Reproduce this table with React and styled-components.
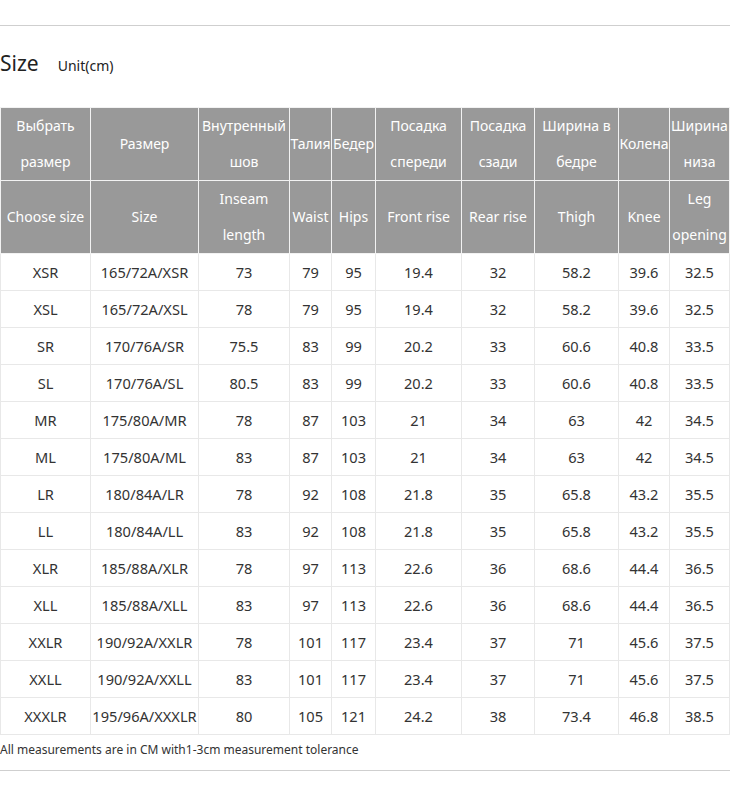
import React from "react";
import styled, { createGlobalStyle } from "styled-components";

const Global = createGlobalStyle`
  html, body { margin: 0; padding: 0; background: #fff; }
  body { font-family: "Noto Sans", "Open Sans", sans-serif; color: #333; }
`;

const Page = styled.div`
  width: 730px;
  padding-top: 25px;
`;

const Rule = styled.div`
  height: 1px;
  background: #cfcfcf;
`;

const TitleRow = styled.div`
  height: 81px;
  display: flex;
  align-items: center;
`;

const TitleGroup = styled.div`
  display: flex;
  align-items: baseline;
  gap: 19px;
  margin-top: -7px;
`;

const Title = styled.span`
  font-size: 21px;
  color: #222;
`;

const Unit = styled.span`
  font-size: 14px;
  color: #222;
`;

const Table = styled.table`
  width: 730px;
  border-collapse: collapse;
  table-layout: fixed;
  font-size: 14px;
`;

const Th = styled.td`
  background: #999999;
  color: #fff;
  border: 1px solid #f2f2f2;
  text-align: center;
  line-height: 36px;
  padding: 0;
  height: 72px;
  white-space: ${(p) => (p.$nowrap ? "nowrap" : "normal")};
  overflow: visible;
`;

const Td = styled.td`
  border: 1px solid #e8e8e8;
  text-align: center;
  line-height: 36px;
  height: 36px;
  padding: 0;
  font-size: 14.6px;
  color: #333;
  white-space: nowrap;
`;

const Note = styled.div`
  height: 35px;
  box-sizing: border-box;
  padding-top: 7px;
  font-size: 12px;
  line-height: 16px;
  color: #333;
`;

const widths = [90, 108, 91, 42, 44, 86, 73, 84, 51, 60];

const ruHead = [
  "Выбрать размер",
  "Размер",
  "Внутренный шов",
  "Талия",
  "Бедер",
  "Посадка спереди",
  "Посадка сзади",
  "Ширина в бедре",
  "Колена",
  "Ширина низа",
];

const enHead = [
  "Choose size",
  "Size",
  "Inseam length",
  "Waist",
  "Hips",
  "Front rise",
  "Rear rise",
  "Thigh",
  "Knee",
  "Leg opening",
];

const rows = [
  ["XSR", "165/72A/XSR", "73", "79", "95", "19.4", "32", "58.2", "39.6", "32.5"],
  ["XSL", "165/72A/XSL", "78", "79", "95", "19.4", "32", "58.2", "39.6", "32.5"],
  ["SR", "170/76A/SR", "75.5", "83", "99", "20.2", "33", "60.6", "40.8", "33.5"],
  ["SL", "170/76A/SL", "80.5", "83", "99", "20.2", "33", "60.6", "40.8", "33.5"],
  ["MR", "175/80A/MR", "78", "87", "103", "21", "34", "63", "42", "34.5"],
  ["ML", "175/80A/ML", "83", "87", "103", "21", "34", "63", "42", "34.5"],
  ["LR", "180/84A/LR", "78", "92", "108", "21.8", "35", "65.8", "43.2", "35.5"],
  ["LL", "180/84A/LL", "83", "92", "108", "21.8", "35", "65.8", "43.2", "35.5"],
  ["XLR", "185/88A/XLR", "78", "97", "113", "22.6", "36", "68.6", "44.4", "36.5"],
  ["XLL", "185/88A/XLL", "83", "97", "113", "22.6", "36", "68.6", "44.4", "36.5"],
  ["XXLR", "190/92A/XXLR", "78", "101", "117", "23.4", "37", "71", "45.6", "37.5"],
  ["XXLL", "190/92A/XXLL", "83", "101", "117", "23.4", "37", "71", "45.6", "37.5"],
  ["XXXLR", "195/96A/XXXLR", "80", "105", "121", "24.2", "38", "73.4", "46.8", "38.5"],
];

export default function App() {
  return (
    <Page>
      <Global />
      <Rule />
      <TitleRow>
        <TitleGroup>
          <Title>Size</Title>
          <Unit>Unit(cm)</Unit>
        </TitleGroup>
      </TitleRow>
      <Table>
        <colgroup>
          {widths.map((w, i) => (
            <col key={i} style={{ width: w }} />
          ))}
        </colgroup>
        <tbody>
          <tr>
            {ruHead.map((h, i) => (
              <Th key={i} $nowrap={i === 3 || i === 4 || i === 8}>
                {h}
              </Th>
            ))}
          </tr>
          <tr>
            {enHead.map((h, i) => (
              <Th key={i} $nowrap={i === 0 || i === 5}>
                {h}
              </Th>
            ))}
          </tr>
          {rows.map((r, ri) => (
            <tr key={ri}>
              {r.map((c, ci) => (
                <Td key={ci}>{c}</Td>
              ))}
            </tr>
          ))}
        </tbody>
      </Table>
      <Note>All measurements are in CM with1-3cm measurement tolerance</Note>
      <Rule />
    </Page>
  );
}
